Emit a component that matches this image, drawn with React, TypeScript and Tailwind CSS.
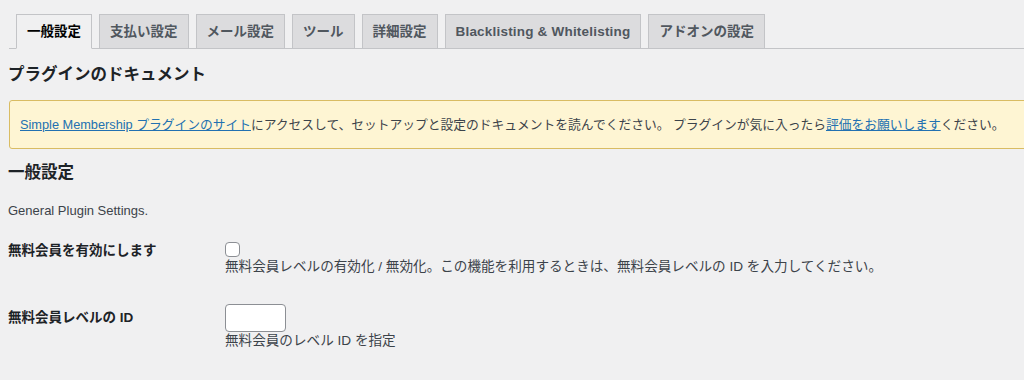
import { useState } from "react";

const tabs = [
  "一般設定",
  "支払い設定",
  "メール設定",
  "ツール",
  "詳細設定",
  "Blacklisting & Whitelisting",
  "アドオンの設定",
];

export default function App() {
  const [active, setActive] = useState(0);
  const [freeEnabled, setFreeEnabled] = useState(false);
  const [levelId, setLevelId] = useState("");

  return (
    <div className="w-[1024px] h-[380px] overflow-hidden bg-[#f0f0f1] pl-[8px] font-['Liberation_Sans','Noto_Sans_CJK_JP',sans-serif] text-[#3c434a]">
      {/* Tabs */}
      <div className="ml-[1px] w-[1030px] pt-[14px] flex gap-[7px] pl-[7px] border-b border-[#c3c4c7]">
        {tabs.map((t, i) => (
          <button
            key={t}
            onClick={() => setActive(i)}
            className={
              (i === active
                ? "border-b-[#f0f0f1] bg-[#f0f0f1] text-black "
                : "bg-[#dcdcde] text-[#50575e] ") +
              (i === 5 ? "tracking-[0.2px] " : "") +
              "h-[35px] -mb-px px-[10px] flex items-center border border-[#c3c4c7] text-[13.5px] leading-[20px] font-bold whitespace-nowrap"
            }
          >
            {t}
          </button>
        ))}
      </div>

      <h2 className="mt-[15px] text-[16.5px] leading-[21px] font-bold text-[#1d2327]">
        プラグインのドキュメント
      </h2>

      {/* Notice */}
      <div className="mt-[15px] ml-[1px] w-[1030px] h-[49px] flex items-center px-[10px] bg-[#fef5d3] border border-[#d9bc63] rounded-[3px] text-[12.75px] leading-[20px] whitespace-nowrap">
        <a href="#" className="text-[#2271b1] underline">
          Simple Membership プラグインのサイト
        </a>
        <span>にアクセスして、セットアップと設定のドキュメントを読んでください。 プラグインが気に入ったら</span>
        <a href="#" className="text-[#2271b1] underline">
          評価をお願いします
        </a>
        <span>ください。</span>
      </div>

      <h2 className="mt-[13px] text-[16.5px] leading-[21px] font-bold text-[#1d2327]">一般設定</h2>
      <p className="mt-[18px] text-[13px] leading-[20px]">General Plugin Settings.</p>

      {/* Row 1 */}
      <div className="mt-[20px] flex">
        <div className="w-[217px] text-[13.5px] leading-[20px] font-bold text-[#1d2327]">無料会員を有効にします</div>
        <div>
          <input
            type="checkbox"
            checked={freeEnabled}
            onChange={(e) => setFreeEnabled(e.target.checked)}
            className="appearance-none block mt-[1px] w-[15px] h-[15px] bg-white border border-[#8c8f94] rounded-[4px]"
          />
          <p className="mt-[1px] text-[13.6px] leading-[18px] whitespace-nowrap">
            無料会員レベルの有効化 / 無効化。この機能を利用するときは、無料会員レベルの ID を入力してください。
          </p>
        </div>
      </div>

      {/* Row 2 */}
      <div className="mt-[28px] flex">
        <div className="w-[217px] mt-[4px] text-[13.5px] leading-[20px] font-bold text-[#1d2327]">無料会員レベルの ID</div>
        <div>
          <input
            type="text"
            value={levelId}
            onChange={(e) => setLevelId(e.target.value)}
            className="block w-[61px] h-[28px] px-[6px] bg-white border border-[#8c8f94] rounded-[4px] text-[13.5px] outline-none"
          />
          <p className="text-[13.6px] leading-[18px] whitespace-nowrap">無料会員のレベル ID を指定</p>
        </div>
      </div>
    </div>
  );
}
